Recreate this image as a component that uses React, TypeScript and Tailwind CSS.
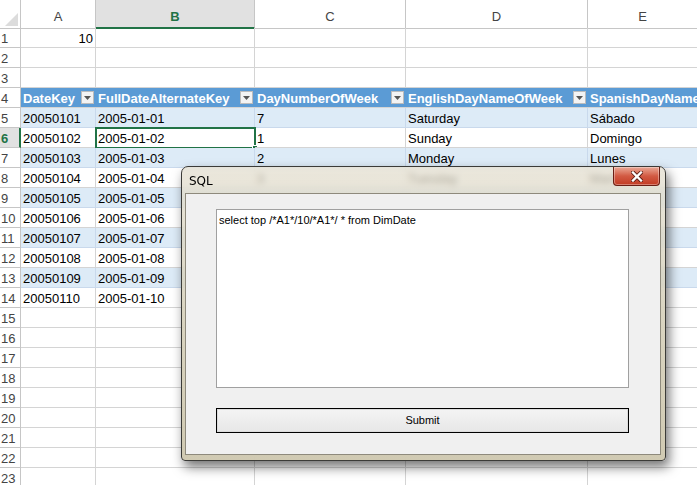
import React from "react"

const GRID = "grid grid-cols-[21px_75px_159px_151px_182px_1fr]"

// rows 9-14 of C..E sit fully under the dialog, so they are left blank
const data = [
  ["20050101", "2005-01-01", "7", "Saturday", "Sábado"],
  ["20050102", "2005-01-02", "1", "Sunday", "Domingo"],
  ["20050103", "2005-01-03", "2", "Monday", "Lunes"],
  ["20050104", "2005-01-04", "3", "Tuesday", "Martes"],
  ["20050105", "2005-01-05", "", "", ""],
  ["20050106", "2005-01-06", "", "", ""],
  ["20050107", "2005-01-07", "", "", ""],
  ["20050108", "2005-01-08", "", "", ""],
  ["20050109", "2005-01-09", "", "", ""],
  ["20050110", "2005-01-10", "", "", ""],
]

const headers = ["DateKey", "FullDateAlternateKey", "DayNumberOfWeek", "EnglishDayNameOfWeek", "SpanishDayNameOfWeek"]

function FilterButton() {
  return (
    <span className="ml-auto mr-[1px] flex h-[13px] w-[13px] shrink-0 items-center justify-center border border-[#bcbcbc] bg-[#f3f3f3]">
      <svg width="7" height="4" viewBox="0 0 7 4">
        <polygon points="0,0 7,0 3.5,4" fill="#555" />
      </svg>
    </span>
  )
}

function RowHeader({ n, active }: { n: number; active?: boolean }) {
  return (
    <div
      className={`flex h-[20px] items-center border-b pl-[1px] pt-[2px] ${
        active
          ? "border-r-2 border-b-[#c6c6c6] border-r-[#217346] bg-[#e1e1e1] font-bold text-[#217346]"
          : "border-r border-[#c6c6c6] text-[#444]"
      }`}
    >
      {n}
    </div>
  )
}

function EmptyRow({ n, first }: { n: number; first?: string }) {
  return (
    <div className={GRID}>
      <RowHeader n={n} />
      <div className="flex h-[20px] items-center justify-end border-r border-b border-[#d4d4d4] pr-[2px] pt-[2px]">{first}</div>
      <div className="h-[20px] border-r border-b border-[#d4d4d4]" />
      <div className="h-[20px] border-r border-b border-[#d4d4d4]" />
      <div className="h-[20px] border-r border-b border-[#d4d4d4]" />
      <div className="h-[20px] border-b border-[#d4d4d4]" />
    </div>
  )
}

function SqlDialog() {
  return (
    <div className="absolute left-[181px] top-[166px] flex h-[295px] w-[485px] flex-col rounded-t-[7px] rounded-b-[4px] border border-[#3b3b38] bg-gradient-to-b from-[#e4dfd0]/75 via-[#d3cdb6]/85 to-[#cbc4aa]/90 shadow-[3px_6px_12px_rgba(0,0,0,0.55)] backdrop-blur-[3px]">
      <div className="flex h-[26px] shrink-0 items-start justify-between">
        <span className="self-center pl-[7px] pt-[1px] font-['DejaVu_Sans',sans-serif] text-[12px] text-black">SQL</span>
        <div className="mr-[5px] flex h-[19px] w-[47px] items-center justify-center rounded-b-[4px] border border-t-0 border-[#6b1e14] bg-gradient-to-b from-[#e9a896] via-[#d25a43] to-[#c23a22] shadow-[inset_0_0_0_1px_rgba(255,255,255,0.35)]">
          <svg width="12" height="11" viewBox="0 0 12 11">
            <path d="M2 1.5 L10 9.5 M10 1.5 L2 9.5" stroke="#5a1a12" strokeWidth="4" strokeLinecap="square" />
            <path d="M2 1.5 L10 9.5 M10 1.5 L2 9.5" stroke="#fff" strokeWidth="2.4" strokeLinecap="square" />
          </svg>
        </div>
      </div>
      <div className="mb-[5px] ml-[3px] mr-[4px] flex flex-1 flex-col border border-[#8e8a7c] bg-[#f0f0f0] pl-[30px] pt-[15px] font-['Liberation_Sans',Arial,sans-serif] text-[11px] text-black">
        <div className="h-[179px] w-[413px] border border-[#a0a0a0] bg-white pl-[2px] pt-[4px] leading-[13px]">
          select top /*A1*/10/*A1*/ * from DimDate
        </div>
        <div className="mt-[20px] flex h-[25px] w-[413px] items-center justify-center border border-black bg-gradient-to-b from-[#f4f4f4] to-[#e7e7e7] shadow-[inset_0_0_0_1px_#dcdcdc]">
          Submit
        </div>
      </div>
    </div>
  )
}

export default function App() {
  return (
    <div className="relative h-[485px] w-[697px] overflow-hidden bg-white font-['Liberation_Sans',Arial,sans-serif] text-[13px] text-black">
      {/* column headers */}
      <div className={`${GRID} h-[28px]`}>
        <div className="flex items-end justify-end border-r border-b border-[#c6c6c6] pb-[2px] pr-[2px]">
          <svg width="13" height="13" viewBox="0 0 13 13">
            <polygon points="13,0 13,13 0,13" fill="#dcdcdc" />
          </svg>
        </div>
        <div className="flex items-center justify-center border-r border-b border-[#c6c6c6] pt-[6px] text-[#444]">A</div>
        <div className="flex items-center justify-center border-r border-b-2 border-r-[#c6c6c6] border-b-[#217346] bg-[#e1e1e1] pt-[7px] font-bold text-[#217346]">B</div>
        <div className="flex items-center justify-center border-r border-b border-[#c6c6c6] pt-[6px] text-[#444]">C</div>
        <div className="flex items-center justify-center border-r border-b border-[#c6c6c6] pt-[6px] text-[#444]">D</div>
        <div className="flex items-center justify-center border-b border-[#c6c6c6] pt-[6px] text-[#444]">E</div>
      </div>

      <EmptyRow n={1} first="10" />
      <EmptyRow n={2} />
      <EmptyRow n={3} />

      {/* table header */}
      <div className={GRID}>
        <RowHeader n={4} />
        {headers.map((h) => (
          <div
            key={h}
            className="flex h-[20px] items-center overflow-hidden whitespace-nowrap border-b border-b-[#d4d4d4] bg-[#5b9bd5] pl-[2px] pr-[1px] font-bold text-white"
          >
            <span className="pt-[2px]">{h}</span>
            {h !== "SpanishDayNameOfWeek" && <FilterButton />}
          </div>
        ))}
      </div>

      {data.map((row, i) => {
        const n = i + 5
        const band = i % 2 === 0
        const cell = band
          ? "bg-[#ddebf7] border-r border-b border-[#c9d9ec]"
          : "border-r border-b border-[#d4d4d4]"
        return (
          <div key={n} className={GRID}>
            <RowHeader n={n} active={n === 6} />
            {row.map((v, j) => (
              <div
                key={j}
                className={`relative flex h-[20px] items-center whitespace-nowrap pl-[2px] pt-[2px] ${cell} ${j === 4 ? "border-r-0" : ""}`}
              >
                {v}
                {n === 6 && j === 1 && (
                  <div className="absolute -left-[1px] -top-[1px] h-[22px] w-[161px] border-2 border-[#217346]">
                    <div className="absolute -bottom-[4px] -right-[4px] h-[6px] w-[6px] border border-white bg-[#217346]" />
                  </div>
                )}
              </div>
            ))}
          </div>
        )
      })}

      {[15, 16, 17, 18, 19, 20, 21, 22, 23].map((n) => (
        <EmptyRow key={n} n={n} />
      ))}

      <SqlDialog />
    </div>
  )
}
